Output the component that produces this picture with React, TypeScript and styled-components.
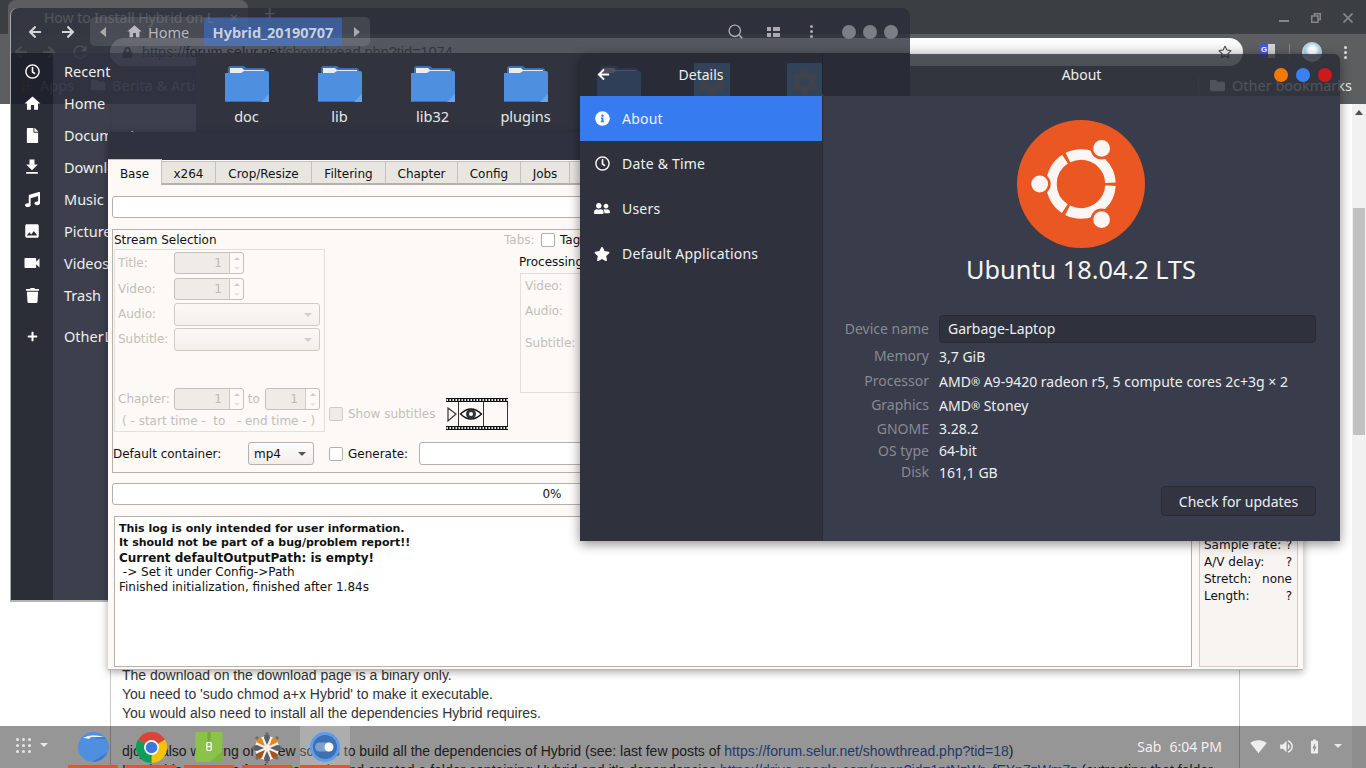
import React from "react";
import styled, { createGlobalStyle } from "styled-components";
import {
  FaRegClock,
  FaFile,
  FaMusic,
  FaTrash,
  FaPlus,
  FaInfoCircle,
  FaUserFriends,
  FaStar,
  FaArrowLeft,
  FaArrowRight,
  FaLock,
  FaRegStar,
  FaFolder,
  FaCog,
} from "react-icons/fa";
import {
  MdFileDownload,
  MdImage,
  MdVideocam,
  MdRefresh,
  MdHome,
  MdSignalWifi4Bar,
  MdVolumeUp,
  MdBatteryChargingFull,
} from "react-icons/md";
import { Search } from "lucide-react";

const ui = `"Noto Sans", "Open Sans", sans-serif`;
const qt = `"DejaVu Sans", sans-serif`;
const web = `"Liberation Sans", Arial, sans-serif`;

const Global = createGlobalStyle`
  html, body { margin: 0; padding: 0; overflow: hidden; background: #fff; }
  * { box-sizing: border-box; }
`;

const Desktop = styled.div`
  position: relative;
  width: 1366px;
  height: 768px;
  overflow: hidden;
  background: #fff;
`;

/* ---------- browser behind everything ---------- */

const Browser = styled.div`
  display: flex;
  flex-direction: column;
  width: 100%;
  height: 100%;
`;

const BrowserTitle = styled.div`
  height: 34px;
  flex: none;
  display: flex;
  align-items: flex-end;
  padding-left: 8px;
  background: #3c3f41;
  color: #d8d8d8;
  font: 14px ${ui};
`;

const BrowserTab = styled.div`
  width: 240px;
  height: 34px;
  display: flex;
  align-items: center;
  justify-content: space-between;
  padding: 0 10px 0 36px;
  border-radius: 8px 8px 0 0;
  background: #5b5d5f;
  color: #f0f0f0;
`;

const TabPlus = styled.span`
  margin: 0 0 8px 16px;
  font-size: 20px;
  color: #ddd;
`;

const WinControls = styled.div`
  margin: 0 13px 0 auto;
  align-self: flex-start;
  padding-top: 13px;
  display: flex;
  align-items: flex-start;
  gap: 22px;
`;

const WinMin = styled.span`
  width: 10px;
  height: 2px;
  margin-top: 7px;
  background: #85888a;
`;

const BrowserBars = styled.div`
  height: 70px;
  flex: none;
  background: #5c5e60;
  color: #eee;
`;

const Toolbar = styled.div`
  height: 32px;
  display: flex;
  align-items: center;
  padding: 4px 0 0 14px;
  color: #c8c8c8;
`;

const ToolNav = styled.div`
  width: 96px;
  flex: none;
  display: flex;
  align-items: center;
  gap: 14px;
`;

const AddressBar = styled.div`
  width: 1133px;
  height: 28px;
  flex: none;
  display: flex;
  align-items: center;
  gap: 9px;
  padding: 0 11px 0 12px;
  border-radius: 14px;
  background: linear-gradient(#fff, #e4e4e4);
  color: #555;
  font: 14.5px ${web};
`;

const UrlHost = styled.span`
  color: #111;
`;

const AddressText = styled.span`
  flex: 1;
`;

const TranslateIcon = styled.span`
  margin: -2px 0 0 16px;
  width: 16px;
  height: 14px;
  flex: none;
  background: linear-gradient(90deg, #4a55d8 9px, #cfd2d6 9px);
  color: #fff;
  font: bold 8px/12px ${web};
  padding-left: 2px;
`;

const ToolDivider = styled.span`
  margin-left: 14px;
  width: 1px;
  height: 16px;
  background: #888;
`;

const ToolbarAvatar = styled.span`
  margin-left: 12px;
  width: 20px;
  height: 20px;
  border-radius: 50%;
  background: radial-gradient(circle at 52% 42%, #fff 22%, #a6d2e6 48%, #e9e4ea 72%, #b9bcc2);
`;

const MenuDots = styled.span<{ $ml?: number }>`
  display: flex;
  flex-direction: column;
  gap: 2px;
  margin-left: ${(p) => p.$ml ?? 0}px;
`;

const MenuDot = styled.i<{ $c?: string; $s?: number }>`
  display: block;
  width: ${(p) => p.$s ?? 3}px;
  height: ${(p) => p.$s ?? 3}px;
  border-radius: 50%;
  background: ${(p) => p.$c ?? "#ddd"};
`;

const Bookmarks = styled.div`
  height: 38px;
  display: flex;
  align-items: center;
  padding: 0 14px 0 22px;
  font: 14.5px ${ui};
`;

const BookmarkItem = styled.span<{ $ml?: number }>`
  display: inline-flex;
  align-items: center;
  gap: 7px;
  margin-left: ${(p) => p.$ml ?? 0}px;
  white-space: nowrap;
`;

const BookmarkDivider = styled.span`
  margin-left: auto;
  width: 1px;
  height: 18px;
  background: #777;
  margin-right: 11px;
`;

const AppsGrid = styled.span`
  display: grid;
  grid-template-columns: repeat(3, 3px);
  gap: 1px;
`;

const PageViewport = styled.div`
  flex: 1;
  display: flex;
  min-height: 0;
  background: #fff;
`;

const PageGutter = styled.div<{ $w: number }>`
  flex: none;
  width: ${(p) => p.$w}px;
`;

const PageColumn = styled.div`
  flex: none;
  width: 1130px;
  padding: 562px 0 0 11px;
  border-left: 1px solid #c8c8c8;
  border-right: 1px solid #c8c8c8;
  color: #333;
  font: 14px/19px ${web};
  white-space: nowrap;
`;

const PageLine = styled.div<{ $gap?: boolean }>`
  margin-top: ${(p) => (p.$gap ? 19 : 0)}px;
`;

const PageLink = styled.span`
  color: #3a63b8;
`;

const Scrollbar = styled.div`
  flex: none;
  width: 14px;
  margin-left: auto;
  display: flex;
  flex-direction: column;
  background: #f1f1f1;
`;

const ScrollArrowUp = styled.div`
  margin: 6px auto 0;
  width: 0;
  height: 0;
  border: 4px solid transparent;
  border-top: 0;
  border-bottom: 5px solid #505050;
`;

const ScrollThumb = styled.div`
  margin: 93px 1px 0;
  height: 227px;
  background: #c1c1c1;
`;

/* ---------- nautilus ---------- */

const FilesWindow = styled.div`
  position: absolute;
  left: 10px;
  top: 8px;
  width: 900px;
  height: 594px;
  display: flex;
  flex-direction: column;
  border-radius: 8px 8px 0 0;
  border-left: 1px solid #aaa;
  border-bottom: 2px solid #b4b4b4;
  color: #eee;
  font: 14.5px ${ui};
`;

const FilesHeader = styled.div`
  height: 45px;
  flex: none;
  display: flex;
  align-items: center;
  padding: 2px 12px 0 17px;
  border-radius: 8px 8px 0 0;
  background: rgba(42, 46, 58, 0.8);
`;

const HeaderArrow = styled.span`
  display: flex;
  width: 33px;
  color: #d6d6d6;
  font-size: 14px;
`;

const PathBar = styled.div`
  margin-left: -4px;
  height: 29px;
  width: 280px;
  display: flex;
  align-items: center;
  border-radius: 5px;
  background: rgba(255, 255, 255, 0.1);
  color: #b8bac0;
  font-size: 14.5px;
`;

const PathCaret = styled.span<{ $left?: boolean }>`
  width: 0;
  height: 0;
  margin: ${(p) => (p.$left ? "0 0 0 10px" : "0 0 0 12px")};
  border: 5px solid transparent;
  ${(p) => (p.$left ? "border-left: 0; border-right: 6px solid #aaa;" : "border-right: 0; border-left: 6px solid #aaa;")}
`;

const PathHome = styled.span`
  display: inline-flex;
  align-items: center;
  gap: 5px;
  width: 90px;
  margin-left: 8px;
  padding-left: 12px;
`;

const PathCurrent = styled.span`
  align-self: stretch;
  width: 138px;
  margin-top: 1px;
  display: flex;
  align-items: center;
  justify-content: center;
  background: rgba(54, 123, 240, 0.45);
  color: #c8d0dc;
  font-weight: 700;
`;

const HeaderTools = styled.div`
  margin-left: auto;
  display: flex;
  align-items: center;
  color: #a9abb0;
`;

const HeaderTool = styled.span<{ $mr: number }>`
  display: flex;
  align-items: center;
  margin-right: ${(p) => p.$mr}px;
`;

const ListGlyph = styled.span`
  display: grid;
  grid-template-columns: 4px 7px;
  gap: 2px 2px;
`;

const ListCell = styled.i`
  display: block;
  height: 4px;
  background: #a9abb0;
`;

const WindowDot = styled.span`
  width: 14px;
  height: 14px;
  margin-left: 7px;
  border-radius: 50%;
  background: #7b7e85;
`;

const FilesBody = styled.div`
  flex: 1;
  display: flex;
  min-height: 0;
`;

const SideRail = styled.div`
  width: 42px;
  flex: none;
  padding-top: 2px;
  background: rgba(27, 30, 40, 0.93);
`;

const SideList = styled.div`
  width: 143px;
  flex: none;
  padding-top: 2px;
  background: rgba(44, 47, 62, 0.92);
`;

const SideCell = styled.div<{ $gap?: number }>`
  height: 32px;
  margin-top: ${(p) => p.$gap ?? 0}px;
  display: flex;
  align-items: center;
`;

const RailIcon = styled(SideCell)`
  justify-content: center;
  color: #fff;
  font-size: 15px;
`;

const SideLabel = styled(SideCell)`
  padding-left: 11px;
  white-space: nowrap;
  word-spacing: -3px;
  overflow: hidden;
`;

const FilesMain = styled.div`
  flex: 1;
  display: flex;
  align-items: flex-start;
  padding: 12px 0 0 4px;
  background: #31343f;
`;

const FileItem = styled.div`
  width: 93px;
  flex: none;
  display: flex;
  flex-direction: column;
  align-items: center;
  gap: 3px;
  color: #e8e8e8;
`;

const FileTile = styled.div`
  width: 36px;
  height: 38px;
  margin-top: -2px;
  display: flex;
  align-items: center;
  justify-content: center;
  border-radius: 2px;
  background: #4fa3e0;
  color: #9b9d9f;
  font-size: 28px;
`;

/* ---------- hybrid ---------- */

const HybridWindow = styled.div`
  position: absolute;
  left: 108px;
  top: 132px;
  width: 1195px;
  height: 538px;
  display: flex;
  flex-direction: column;
  background: #fcf9f6;
  color: #111;
  font: 12px ${qt};
  box-shadow: 0 2px 8px rgba(0, 0, 0, 0.35);
  border-bottom: 1px solid #b9b5b0;
`;

const HybridTitle = styled.div`
  height: 28px;
  flex: none;
  background: #2f323e;
`;

const TabRow = styled.div`
  height: 25px;
  flex: none;
  display: flex;
  align-items: flex-end;
  border-bottom: 1px solid #b5b0aa;
`;

const QtTab = styled.div<{ $w: number; $on?: boolean }>`
  width: ${(p) => p.$w}px;
  height: ${(p) => (p.$on ? 26 : 23)}px;
  margin-bottom: ${(p) => (p.$on ? -1 : 0)}px;
  padding-top: ${(p) => (p.$on ? 2 : 3)}px;
  display: flex;
  align-items: center;
  justify-content: center;
  border: 1px solid #c4c0ba;
  border-left: 0;
  background: ${(p) => (p.$on ? "#fcf9f6" : "#e8e6e1")};
  border-bottom: ${(p) => (p.$on ? "0" : "1px solid #b5b0aa")};
  flex: none;
`;

const HybridBody = styled.div`
  flex: 1;
  display: flex;
  flex-direction: column;
  min-height: 0;
  padding: 11px 5px 2px 4px;
`;

const QtInput = styled.div`
  height: 22px;
  flex: none;
  border: 1px solid #b5b0aa;
  border-radius: 3px;
  background: #fff;
`;

const GroupFrame = styled.div`
  height: 244px;
  margin-top: 11px;
  flex: none;
  padding-left: 1px;
  border: 1px solid #b5b0aa;
`;

const GroupTop = styled.div`
  height: 202px;
  display: flex;
`;

const StreamCol = styled.div`
  width: 211px;
  flex: none;
`;

const ColLabel = styled.div`
  height: 19px;
  line-height: 20px;
  white-space: nowrap;
`;

const DisabledFrame = styled.div<{ $h: number }>`
  height: ${(p) => p.$h}px;
  padding: 2px 4px 0 3px;
  border: 1px solid #e3dfda;
  color: #c2bfbb;
`;

const FormRow = styled.div<{ $top?: number }>`
  display: flex;
  align-items: center;
  margin-top: ${(p) => p.$top ?? 0}px;
  white-space: nowrap;
`;

const FormLabel = styled.span<{ $w?: number }>`
  width: ${(p) => p.$w ?? 56}px;
  padding-bottom: 1px;
  flex: none;
`;

const Spin = styled.div<{ $w?: number }>`
  width: ${(p) => p.$w ?? 70}px;
  height: 22px;
  flex: none;
  display: flex;
  border: 1px solid #c4c0bb;
  border-radius: 3px;
  background: #efebe7;
`;

const SpinValue = styled.span`
  flex: 1;
  text-align: right;
  padding-right: 7px;
  line-height: 21px;
  color: #bdbab6;
`;

const SpinButtons = styled.span`
  width: 14px;
  display: flex;
  flex-direction: column;
  align-items: center;
  justify-content: space-around;
  border-left: 1px solid #cfcbc6;
  background: #fcf9f6;
  border-radius: 0 3px 3px 0;
`;

const Arrow = styled.i<{ $up?: boolean; $c?: string; $s?: number }>`
  display: block;
  width: 0;
  height: 0;
  border: ${(p) => p.$s ?? 3}px solid transparent;
  ${(p) =>
    p.$up
      ? `border-top: 0; border-bottom-color: ${p.$c ?? "#ccc"};`
      : `border-bottom: 0; border-top-color: ${p.$c ?? "#ccc"};`}
`;

const ComboBox = styled.div<{ $w?: number; $on?: boolean }>`
  width: ${(p) => (p.$w ? `${p.$w}px` : "146px")};
  height: 23px;
  flex: none;
  display: flex;
  align-items: center;
  justify-content: space-between;
  padding: 0 7px 0 5px;
  border: 1px solid ${(p) => (p.$on ? "#b5b0aa" : "#cfcbc6")};
  border-radius: 3px;
  background: ${(p) => (p.$on ? "linear-gradient(#fdfcfa, #f1eeea)" : "linear-gradient(#fbf9f6, #f3f0ec)")};
  color: ${(p) => (p.$on ? "#111" : "#c2bfbb")};
`;

const TimeCaption = styled.div`
  margin: 4px 0 0 4px;
  white-space: pre;
`;

const MidCol = styled.div`
  width: 175px;
  flex: none;
  margin-left: 4px;
  display: flex;
  align-items: flex-end;
  padding-bottom: 2px;
`;

const CheckBox = styled.span<{ $off?: boolean }>`
  width: 14px;
  height: 14px;
  flex: none;
  border: 1px solid ${(p) => (p.$off ? "#cfcbc6" : "#b5b0aa")};
  border-radius: 2px;
  background: ${(p) => (p.$off ? "#efebe7" : "#fff")};
`;

const CheckText = styled.span<{ $off?: boolean }>`
  margin-left: 5px;
  color: ${(p) => (p.$off ? "#c2bfbb" : "#111")};
  white-space: nowrap;
`;

const ShowSubs = styled.div`
  display: flex;
  align-items: center;
  width: 117px;
  flex: none;
  margin-bottom: 9px;
`;

const FilmHolder = styled.div`
  display: flex;
`;

const RightCol = styled.div`
  flex: 1;
  min-width: 0;
`;

const TabsRow = styled.div`
  display: flex;
  align-items: center;
  height: 19px;
  color: #c2bfbb;
`;

const TabsLabel = styled.span`
  width: 37px;
`;

const ProcLabel = styled.div`
  margin: 4px 0 0 15px;
  height: 20px;
  line-height: 19px;
`;

const ProcFrame = styled(DisabledFrame)`
  margin-left: 16px;
  padding: 5px 4px 0 4px;
`;

const GroupBottom = styled.div`
  height: 23px;
  margin: 10px 0 0 -1px;
  display: flex;
  align-items: center;
`;

const ContainerLabel = styled.span`
  width: 135px;
  flex: none;
`;

const GenerateBox = styled.div`
  margin-left: 15px;
  display: flex;
  align-items: center;
`;

const GenerateInput = styled(QtInput)`
  margin: 0 6px 0 11px;
  width: 700px;
  height: 23px;
`;

const ProgressBar = styled(QtInput)`
  margin-top: 10px;
  width: 880px;
  text-align: center;
  line-height: 21px;
`;

const LogArea = styled.div`
  flex: 1;
  min-height: 0;
  margin-top: 11px;
  display: flex;
`;

const LogBox = styled.div`
  margin-left: 2px;
  width: 1078px;
  flex: none;
  padding: 5px 4px;
  border: 1px solid #b5b0aa;
  background: #fff;
`;

const LogLine = styled.div<{ $bold?: boolean }>`
  font-weight: ${(p) => (p.$bold ? 700 : 400)};
  font-size: ${(p) => (p.$bold ? 11 : 12)}px;
  line-height: ${(p) => (p.$bold ? 13.5 : 15)}px;
  white-space: pre;
`;

const LogHeadline = styled.div`
  padding-top: 2px;
  font-weight: 700;
  font-size: 12px;
  line-height: 14px;
  white-space: pre;
`;

const InfoPanel = styled.div`
  margin-left: 7px;
  width: 99px;
  flex: none;
  padding: 20px 5px 0 4px;
  border: 1px solid #cfcbc6;
  background: #f7f4f1;
  line-height: 17px;
  white-space: nowrap;
`;

const InfoRow = styled.div`
  display: flex;
  justify-content: space-between;
`;

/* ---------- gnome settings ---------- */

const SettingsWindow = styled.div`
  position: absolute;
  left: 580px;
  top: 54px;
  width: 760px;
  height: 487px;
  display: flex;
  flex-direction: column;
  color: #eee;
  font: 14px ${ui};
  box-shadow: 0 3px 12px rgba(0, 0, 0, 0.45);
  border-radius: 6px 6px 0 0;
`;

const SettingsHeader = styled.div`
  height: 42px;
  flex: none;
  display: flex;
  padding-bottom: 2px;
  border-radius: 6px 6px 0 0;
  background: rgba(40, 43, 54, 0.8);
`;

const HeaderLeft = styled.div`
  position: relative;
  width: 243px;
  flex: none;
  display: flex;
  align-items: center;
  justify-content: center;
  border-right: 1px solid #23252c;
`;

const BackButton = styled.span`
  position: absolute;
  left: 17px;
  top: 14px;
  display: flex;
  font-size: 13px;
  color: #fff;
`;

const HeaderRight = styled.div`
  position: relative;
  flex: 1;
  display: flex;
  align-items: center;
  justify-content: center;
`;

const TrafficDots = styled.div`
  position: absolute;
  right: 8px;
  top: 14px;
  display: flex;
  gap: 8px;
`;

const TrafficDot = styled.span<{ $c: string }>`
  width: 14px;
  height: 14px;
  border-radius: 50%;
  background: ${(p) => p.$c};
`;

const SettingsBody = styled.div`
  flex: 1;
  display: flex;
  min-height: 0;
`;

const NavList = styled.div`
  width: 243px;
  flex: none;
  background: #2f323d;
  border-right: 1px solid #292b34;
`;

const NavRow = styled.div<{ $on?: boolean }>`
  height: 45px;
  display: flex;
  align-items: center;
  gap: 12px;
  padding-left: 14px;
  background: ${(p) => (p.$on ? "#367bf0" : "transparent")};
  color: #f0f0f0;
  letter-spacing: 0.2px;
`;

const NavIcon = styled.span`
  width: 16px;
  display: flex;
  justify-content: center;
  font-size: 15px;
  color: #fff;
`;

const AboutPane = styled.div`
  flex: 1;
  display: flex;
  flex-direction: column;
  align-items: center;
  padding: 24px 24px 0 23px;
  background: #393c4a;
`;

const OsName = styled.div`
  margin-top: 6px;
  height: 30px;
  line-height: 30px;
  font-size: 25.3px;
  color: #f4f4f4;
`;

const InfoGrid = styled.div`
  align-self: stretch;
  margin-top: 31px;
  display: grid;
  grid-template-columns: 83px 1fr;
  column-gap: 10px;
`;

const InfoLabel = styled.div<{ $h: number }>`
  height: ${(p) => p.$h}px;
  padding-bottom: 1px;
  display: flex;
  align-items: center;
  justify-content: flex-end;
  color: #878a94;
  white-space: nowrap;
`;

const InfoValue = styled.div<{ $h: number; $low?: boolean }>`
  height: ${(p) => p.$h}px;
  padding-top: ${(p) => (p.$low ? 2 : 0)}px;
  display: flex;
  align-items: center;
  color: #eceff1;
  white-space: nowrap;
`;

const NameInput = styled.div`
  width: 100%;
  height: 28px;
  display: flex;
  align-items: center;
  padding: 0 0 2px 8px;
  border: 1px solid #292b34;
  border-radius: 4px;
  background: #2f323d;
`;

const Sup = styled.sup`
  font-size: 11px;
  line-height: 0;
  vertical-align: 6px;
`;

const UpdateButton = styled.div`
  align-self: flex-end;
  width: 155px;
  height: 30px;
  margin-top: 3px;
  display: flex;
  align-items: center;
  justify-content: center;
  border: 1px solid #292b34;
  border-radius: 4px;
  background: #323541;
  color: #eceff1;
`;

/* ---------- dock ---------- */

const Dock = styled.div`
  position: absolute;
  left: 0;
  bottom: 0;
  width: 100%;
  height: 42px;
  display: flex;
  background: rgba(0, 0, 0, 0.41);
`;

const DockGrid = styled.div`
  margin: 12px 0 0 16px;
  width: 52px;
  display: flex;
  align-items: flex-start;
  gap: 9px;
`;

const DotGrid = styled.span`
  display: grid;
  grid-template-columns: repeat(3, 3px);
  gap: 3px;
`;

const DockCaret = styled.span`
  margin-top: 5px;
`;

const DockSlot = styled.div<{ $active?: boolean }>`
  width: 50px;
  margin-right: 8px;
  flex: none;
  display: flex;
  align-items: flex-start;
  justify-content: center;
  padding-top: 6px;
  background: ${(p) => (p.$active ? "rgba(255, 255, 255, 0.22)" : "transparent")};
  border-bottom: 3px solid #e95420;
`;

const DockClock = styled.div`
  margin: 13px 0 0 auto;
  height: 16px;
  display: flex;
  gap: 8px;
  color: #f0f0f0;
  font: 14px/16px ${ui};
`;

const DockTray = styled.div`
  display: flex;
  align-items: flex-start;
  gap: 11px;
  padding: 12px 24px 0 28px;
  color: #eee;
  font-size: 17px;
`;

const TrayCaret = styled.span`
  margin-top: 6px;
`;

const FolderIcon = () => (
  <svg width="46" height="38" viewBox="0 0 46 38">
    <path d="M4 4 Q4 1 7 1 H19 Q21 1 22 3 H39 Q42 3 42 6 V12 H4Z" fill="#3f6fb5" />
    <path d="M6 3 H18 L20 5 H40 V14 H6Z" fill="#e9edf2" />
    <path d="M1 8 H17 L20 6 H43 Q45 6 45 8 V37 H1Z" fill="#4f8fdf" />
    <path d="M1 36 H45 V37 H1Z" fill="#3d72b8" />
    <path d="M37 37 L45 29 V37Z" fill="#6ea4e6" />
  </svg>
);

const UbuntuLogo = () => (
  <svg width="128" height="128" viewBox="0 0 128 128">
    <circle cx="64" cy="64" r="64" fill="#ea5722" />
    <circle
      cx="64"
      cy="64"
      r="29.5"
      fill="none"
      stroke="#fbf6f3"
      strokeWidth="10.5"
      strokeDasharray="58.5 3.28"
      strokeDashoffset="-1.64"
    />
    <circle cx="22.7" cy="64" r="11" fill="#ea5722" />
    <circle cx="84.6" cy="28.4" r="11" fill="#ea5722" />
    <circle cx="84.6" cy="99.6" r="11" fill="#ea5722" />
    <circle cx="22.7" cy="64" r="8.4" fill="#fbf6f3" />
    <circle cx="84.6" cy="28.4" r="8.4" fill="#fbf6f3" />
    <circle cx="84.6" cy="99.6" r="8.4" fill="#fbf6f3" />
  </svg>
);

const FilmStrip = () => {
  const holes = Array.from({ length: 21 }, (_, i) => i * 3 + 0.5);
  return (
    <svg width="62" height="32" viewBox="0 0 62 32">
      <rect x="0" y="0" width="62" height="4" fill="#111" />
      <rect x="0" y="28" width="62" height="4" fill="#111" />
      {holes.map((x) => (
        <g key={x}>
          <rect x={x} y="1" width="1.4" height="2" fill="#fff" />
          <rect x={x} y="29" width="1.4" height="2" fill="#fff" />
        </g>
      ))}
      <path d="M12.5 4 V28 M37.5 4 V28 M61.5 4 V28" stroke="#333" strokeWidth="1" />
      <path d="M2 10 L10 16 L2 23Z" fill="none" stroke="#333" strokeWidth="1.2" />
      <path d="M14.5 16 Q25 6 35.5 16 Q25 26 14.5 16Z" fill="#fff" stroke="#111" strokeWidth="1.4" />
      <circle cx="25" cy="16" r="5" fill="#333" />
      <circle cx="25" cy="16" r="2" fill="#fff" />
    </svg>
  );
};

const WinMaxIcon = () => (
  <svg width="10" height="10" viewBox="0 0 10 10" fill="none" stroke="#85888a">
    <path d="M3.5 2.5 V0.75 H9.25 V6.5 H7" strokeWidth="1.5" />
    <rect x="0.75" y="3" width="6.25" height="6.25" strokeWidth="1.5" />
  </svg>
);

const WinCloseIcon = () => (
  <svg width="10" height="10" viewBox="0 0 10 10" stroke="#85888a" strokeWidth="1.7">
    <path d="M0.5 0.5 L9.5 9.5 M9.5 0.5 L0.5 9.5" />
  </svg>
);

const ChromeIcon = () => (
  <svg width="31" height="31" viewBox="0 0 30 30">
    <path d="M15 15 L2 7.5 A15 15 0 0 1 28 7.5Z" fill="#db4437" />
    <path d="M15 15 L28 7.5 A15 15 0 0 1 15 30Z" fill="#f4c20d" />
    <path d="M15 15 L15 30 A15 15 0 0 1 2 7.5Z" fill="#0f9d58" />
    <circle cx="15" cy="15" r="7.2" fill="#fff" />
    <circle cx="15" cy="15" r="5.6" fill="#3a78e0" />
  </svg>
);

const FolderRound = () => (
  <svg width="31" height="30" viewBox="0 0 31 30">
    <ellipse cx="15.5" cy="15" rx="15.5" ry="15" fill="#4f8fdf" />
    <path d="M14 29.8 L29 21 A15.5 15 0 0 1 14 29.8Z" fill="#4078c4" />
    <path d="M5 6 Q13 1 26 5 L13 5 L11 7 Q8 6 5 6Z" fill="#f2f5f9" />
    <path d="M18 6 H27" stroke="#3a6cb0" strokeWidth="1" />
  </svg>
);

const ArchiveIcon = () => (
  <svg width="28" height="30" viewBox="0 0 28 30">
    <rect x="0.5" y="0" width="27" height="30" rx="1.5" fill="#8bc34a" />
    <path d="M15 30 L27.5 19 V28.5 Q27.5 30 26 30Z" fill="#7cb342" />
    <rect x="12.5" y="0" width="3" height="9" fill="#76a83c" />
    <rect x="11.8" y="10.5" width="4.4" height="8" rx="1" fill="none" stroke="#fff" strokeWidth="1.2" />
    <path d="M12 14.5 H16" stroke="#fff" strokeWidth="1.2" />
  </svg>
);

const ApertureIcon = () => {
  const blades = [
    ["#5c5f63", 0],
    ["#e08a1e", 45],
    ["#5c5f63", 90],
    ["#a7521d", 135],
    ["#5c5f63", 180],
    ["#a7521d", 225],
    ["#5c5f63", 270],
    ["#e08a1e", 315],
  ] as const;
  return (
    <svg width="30" height="32" viewBox="-15 -16 30 32">
      <circle r="12" fill="#f4f2ee" />
      {blades.map(([c, r]) => (
        <g key={r} transform={`rotate(${r})`}>
          <path d="M0 -3 L-3 -10 L-2.5 -13 L2.5 -13 L3 -10Z" fill={c} />
          <path d="M-1.5 -13 H1.5 V-15.5 H-1.5Z" fill="#6a6c70" />
        </g>
      ))}
      <circle r="2.5" fill="#f4f2ee" />
    </svg>
  );
};

const ToggleIcon = () => (
  <svg width="30" height="30" viewBox="0 0 30 30">
    <circle cx="15" cy="15" r="15" fill="#5b9de8" />
    <circle cx="15" cy="15" r="12" fill="#3f6fb5" />
    <rect x="5" y="10.5" width="18" height="9" rx="4.5" fill="#7f9fcf" />
    <circle cx="19" cy="15" r="4.5" fill="#fff" />
  </svg>
);

const folders = ["doc", "lib", "lib32", "plugins"];
const places = ["Recent", "Home", "Documents", "Downloads", "Music", "Pictures", "Videos", "Trash"];
const railIcons = [
  <FaRegClock key="r" />,
  <MdHome key="h" size={19} />,
  <FaFile key="d" />,
  <MdFileDownload key="dl" size={20} />,
  <FaMusic key="m" />,
  <MdImage key="p" size={18} />,
  <MdVideocam key="v" size={20} />,
  <FaTrash key="t" />,
];
const qtTabs: [string, number][] = [
  ["x264", 54],
  ["Crop/Resize", 96],
  ["Filtering", 74],
  ["Chapter", 72],
  ["Config", 63],
  ["Jobs", 49],
  ["Audio", 60],
];

export default function App() {
  return (
    <Desktop>
      <Global />
      <Browser>
        <BrowserTitle>
          <BrowserTab>
            <span>How to Install Hybrid on L</span>
            <span>×</span>
          </BrowserTab>
          <TabPlus>+</TabPlus>
          <WinControls>
            <WinMin />
            <WinMaxIcon />
            <WinCloseIcon />
          </WinControls>
        </BrowserTitle>
        <BrowserBars>
          <Toolbar>
            <ToolNav>
              <FaArrowLeft size={14} />
              <FaArrowRight size={14} />
              <MdRefresh size={20} />
            </ToolNav>
            <AddressBar>
              <FaLock size={11} />
              <AddressText>
                https://<UrlHost>forum.selur.net</UrlHost>/showthread.php?tid=1074
              </AddressText>
              <FaRegStar size={14} />
            </AddressBar>
            <TranslateIcon>G</TranslateIcon>
            <ToolDivider />
            <ToolbarAvatar />
            <MenuDots $ml={22}>
              <MenuDot />
              <MenuDot />
              <MenuDot />
            </MenuDots>
          </Toolbar>
          <Bookmarks>
            <BookmarkItem>
              <AppsGrid>
                {Array.from({ length: 9 }, (_, i) => (
                  <MenuDot key={i} $c={["#d66", "#6a6", "#66c"][i % 3]} />
                ))}
              </AppsGrid>
              Apps
            </BookmarkItem>
            <BookmarkItem $ml={17}>
              <FaFolder size={14} />
              Berita &amp; Artikel
            </BookmarkItem>
            <BookmarkDivider />
            <BookmarkItem>
              <FaFolder size={15} />
              Other bookmarks
            </BookmarkItem>
          </Bookmarks>
        </BrowserBars>
        <PageViewport>
          <PageGutter $w={110} />
          <PageColumn>
            <PageLine>The download on the download page is a binary only.</PageLine>
            <PageLine>You need to 'sudo chmod a+x Hybrid' to make it executable.</PageLine>
            <PageLine>You would also need to install all the dependencies Hybrid requires.</PageLine>
            <PageLine $gap>
              djcj is also working on a few scripts to build all the dependencies of Hybrid (see: last few posts of{" "}
              <PageLink>https://forum.selur.net/showthread.php?tid=18</PageLink>)
            </PageLine>
            <PageLine>
              I took this one step further recently and created a folder containing Hybrid and it's dependencies{" "}
              <PageLink>https://drive.google.com/open?id=1ptNzWr_fEYn7zWm7z</PageLink> (extracting that folder
            </PageLine>
          </PageColumn>
          <Scrollbar>
            <ScrollArrowUp />
            <ScrollThumb />
          </Scrollbar>
        </PageViewport>
      </Browser>

      <FilesWindow>
        <FilesHeader>
          <HeaderArrow>
            <FaArrowLeft />
          </HeaderArrow>
          <HeaderArrow>
            <FaArrowRight />
          </HeaderArrow>
          <PathBar>
            <PathCaret $left />
            <PathHome>
              <MdHome size={17} />
              Home
            </PathHome>
            <PathCurrent>Hybrid_20190707</PathCurrent>
            <PathCaret />
          </PathBar>
          <HeaderTools>
            <HeaderTool $mr={23}>
              <Search size={17} strokeWidth={2} />
            </HeaderTool>
            <HeaderTool $mr={30}>
              <ListGlyph>
                <ListCell />
                <ListCell />
                <ListCell />
                <ListCell />
              </ListGlyph>
            </HeaderTool>
            <HeaderTool $mr={22}>
              <MenuDots>
                <MenuDot $c="#a9abb0" />
                <MenuDot $c="#a9abb0" />
                <MenuDot $c="#a9abb0" />
              </MenuDots>
            </HeaderTool>
            <WindowDot />
            <WindowDot />
            <WindowDot />
          </HeaderTools>
        </FilesHeader>
        <FilesBody>
          <SideRail>
            {railIcons.map((icon) => (
              <RailIcon key={icon.key}>{icon}</RailIcon>
            ))}
            <RailIcon $gap={9}>
              <FaPlus size={11} />
            </RailIcon>
          </SideRail>
          <SideList>
            {places.map((p) => (
              <SideLabel key={p}>{p}</SideLabel>
            ))}
            <SideLabel $gap={9}>Other Locations</SideLabel>
          </SideList>
          <FilesMain>
            {folders.map((f) => (
              <FileItem key={f}>
                <FolderIcon />
                {f}
              </FileItem>
            ))}
            <FileItem>
              <FolderIcon />
              scripts
            </FileItem>
            <FileItem>
              <FileTile>
                <FaCog />
              </FileTile>
            </FileItem>
            <FileItem>
              <FileTile>
                <FaCog />
              </FileTile>
            </FileItem>
          </FilesMain>
        </FilesBody>
      </FilesWindow>

      <HybridWindow>
        <HybridTitle />
        <TabRow>
          <QtTab $w={54} $on>
            Base
          </QtTab>
          {qtTabs.map(([t, w]) => (
            <QtTab key={t} $w={w}>
              {t}
            </QtTab>
          ))}
        </TabRow>
        <HybridBody>
          <QtInput />
          <GroupFrame>
            <GroupTop>
              <StreamCol>
                <ColLabel>Stream Selection</ColLabel>
                <DisabledFrame $h={183}>
                  <FormRow>
                    <FormLabel>Title:</FormLabel>
                    <Spin>
                      <SpinValue>1</SpinValue>
                      <SpinButtons>
                        <Arrow $up />
                        <Arrow $c="#e8e5e1" />
                      </SpinButtons>
                    </Spin>
                  </FormRow>
                  <FormRow $top={4}>
                    <FormLabel>Video:</FormLabel>
                    <Spin>
                      <SpinValue>1</SpinValue>
                      <SpinButtons>
                        <Arrow $up />
                        <Arrow $c="#e8e5e1" />
                      </SpinButtons>
                    </Spin>
                  </FormRow>
                  <FormRow $top={3}>
                    <FormLabel>Audio:</FormLabel>
                    <ComboBox>
                      <span />
                      <Arrow $c="#d2cfcb" $s={4} />
                    </ComboBox>
                  </FormRow>
                  <FormRow $top={2}>
                    <FormLabel>Subtitle:</FormLabel>
                    <ComboBox>
                      <span />
                      <Arrow $c="#d2cfcb" $s={4} />
                    </ComboBox>
                  </FormRow>
                  <FormRow $top={37}>
                    <FormLabel>Chapter:</FormLabel>
                    <Spin>
                      <SpinValue>1</SpinValue>
                      <SpinButtons>
                        <Arrow $up />
                        <Arrow $c="#e8e5e1" />
                      </SpinButtons>
                    </Spin>
                    <FormLabel $w={21}>&nbsp;to</FormLabel>
                    <Spin $w={55}>
                      <SpinValue>1</SpinValue>
                      <SpinButtons>
                        <Arrow $up />
                        <Arrow $c="#e8e5e1" />
                      </SpinButtons>
                    </Spin>
                  </FormRow>
                  <TimeCaption>( - start time -  to   - end time - )</TimeCaption>
                </DisabledFrame>
              </StreamCol>
              <MidCol>
                <ShowSubs>
                  <CheckBox $off />
                  <CheckText $off>Show subtitles</CheckText>
                </ShowSubs>
                <FilmHolder>
                  <FilmStrip />
                </FilmHolder>
              </MidCol>
              <RightCol>
                <TabsRow>
                  <TabsLabel>Tabs:</TabsLabel>
                  <CheckBox />
                  <CheckText>Tags</CheckText>
                </TabsRow>
                <ProcLabel>Processing</ProcLabel>
                <ProcFrame $h={120}>
                  <FormRow>Video:</FormRow>
                  <FormRow $top={11}>Audio:</FormRow>
                  <FormRow $top={18}>Subtitle:</FormRow>
                </ProcFrame>
              </RightCol>
            </GroupTop>
            <GroupBottom>
              <ContainerLabel>Default container:</ContainerLabel>
              <ComboBox $w={66} $on>
                mp4
                <Arrow $c="#555" $s={4} />
              </ComboBox>
              <GenerateBox>
                <CheckBox />
                <CheckText>Generate:</CheckText>
                <GenerateInput />
              </GenerateBox>
            </GroupBottom>
          </GroupFrame>
          <ProgressBar>0%</ProgressBar>
          <LogArea>
            <LogBox>
              <LogLine $bold>This log is only intended for user information.</LogLine>
              <LogLine $bold>It should not be part of a bug/problem report!!</LogLine>
              <LogHeadline>Current defaultOutputPath: is empty!</LogHeadline>
              <LogLine> -&gt; Set it under Config-&gt;Path</LogLine>
              <LogLine>Finished initialization, finished after 1.84s</LogLine>
            </LogBox>
            <InfoPanel>
              <InfoRow>
                <span>Sample rate:</span>
                <span>?</span>
              </InfoRow>
              <InfoRow>
                <span>A/V delay:</span>
                <span>?</span>
              </InfoRow>
              <InfoRow>
                <span>Stretch:</span>
                <span>none</span>
              </InfoRow>
              <InfoRow>
                <span>Length:</span>
                <span>?</span>
              </InfoRow>
            </InfoPanel>
          </LogArea>
        </HybridBody>
      </HybridWindow>

      <SettingsWindow>
        <SettingsHeader>
          <HeaderLeft>
            <BackButton>
              <FaArrowLeft />
            </BackButton>
            Details
          </HeaderLeft>
          <HeaderRight>
            About
            <TrafficDots>
              <TrafficDot $c="#f57900" />
              <TrafficDot $c="#3a80f2" />
              <TrafficDot $c="#cc1a1a" />
            </TrafficDots>
          </HeaderRight>
        </SettingsHeader>
        <SettingsBody>
          <NavList>
            <NavRow $on>
              <NavIcon>
                <FaInfoCircle />
              </NavIcon>
              About
            </NavRow>
            <NavRow>
              <NavIcon>
                <FaRegClock />
              </NavIcon>
              Date &amp; Time
            </NavRow>
            <NavRow>
              <NavIcon>
                <FaUserFriends size={17} />
              </NavIcon>
              Users
            </NavRow>
            <NavRow>
              <NavIcon>
                <FaStar size={16} />
              </NavIcon>
              Default Applications
            </NavRow>
          </NavList>
          <AboutPane>
            <UbuntuLogo />
            <OsName>Ubuntu 18.04.2 LTS</OsName>
            <InfoGrid>
              <InfoLabel $h={28}>Device name</InfoLabel>
              <InfoValue $h={28}>
                <NameInput>Garbage-Laptop</NameInput>
              </InfoValue>
              <InfoLabel $h={26}>Memory</InfoLabel>
              <InfoValue $h={26}>3,7 GiB</InfoValue>
              <InfoLabel $h={23}>Processor</InfoLabel>
              <InfoValue $h={23} $low>
                AMD<Sup>®</Sup>&nbsp;A9-9420 radeon r5, 5 compute cores 2c+3g × 2
              </InfoValue>
              <InfoLabel $h={25}>Graphics</InfoLabel>
              <InfoValue $h={25} $low>
                AMD<Sup>®</Sup>&nbsp;Stoney
              </InfoValue>
              <InfoLabel $h={23}>GNOME</InfoLabel>
              <InfoValue $h={23}>3.28.2</InfoValue>
              <InfoLabel $h={21}>OS type</InfoLabel>
              <InfoValue $h={21}>64-bit</InfoValue>
              <InfoLabel $h={22}>Disk</InfoLabel>
              <InfoValue $h={22}>161,1 GB</InfoValue>
            </InfoGrid>
            <UpdateButton>Check for updates</UpdateButton>
          </AboutPane>
        </SettingsBody>
      </SettingsWindow>

      <Dock>
        <DockGrid>
          <DotGrid>
            {Array.from({ length: 9 }, (_, i) => (
              <MenuDot key={i} $c="#e8e8e8" />
            ))}
          </DotGrid>
          <DockCaret>
            <Arrow $c="#e8e8e8" $s={4} />
          </DockCaret>
        </DockGrid>
        <DockSlot>
          <FolderRound />
        </DockSlot>
        <DockSlot>
          <ChromeIcon />
        </DockSlot>
        <DockSlot>
          <ArchiveIcon />
        </DockSlot>
        <DockSlot>
          <ApertureIcon />
        </DockSlot>
        <DockSlot $active>
          <ToggleIcon />
        </DockSlot>
        <DockClock>
          <span>Sab</span>
          <span>6:04 PM</span>
        </DockClock>
        <DockTray>
          <MdSignalWifi4Bar />
          <MdVolumeUp />
          <MdBatteryChargingFull />
          <TrayCaret>
            <Arrow $c="#e8e8e8" $s={4} />
          </TrayCaret>
        </DockTray>
      </Dock>
    </Desktop>
  );
}
